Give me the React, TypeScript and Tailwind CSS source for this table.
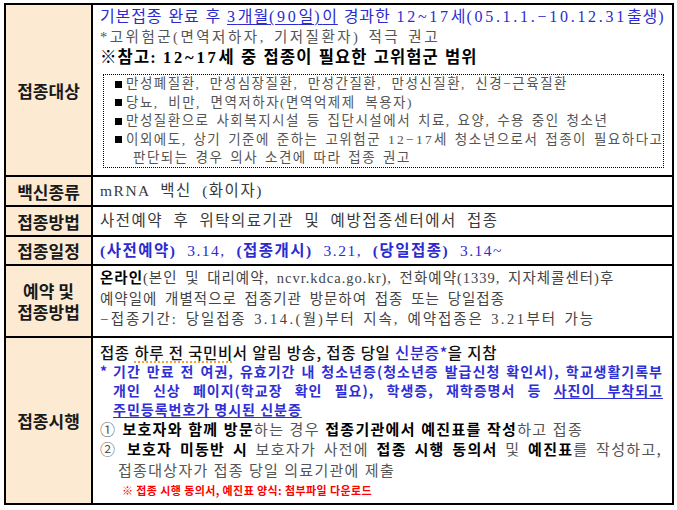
import React from "react";

const serif = "font-['Liberation_Serif','Noto_Sans_CJK_KR',sans-serif]";
const sans = "font-['Noto_Sans_CJK_KR',sans-serif]";

function Row({
  label,
  className,
  children,
}: {
  label: React.ReactNode;
  className: string;
  children: React.ReactNode;
}) {
  return (
    <div className={"flex " + className}>
      <div className="w-[87px] shrink-0 bg-[#fcead3] border-r-2 border-black flex flex-col items-center justify-center text-center font-['Noto_Sans_CJK_KR',sans-serif] font-bold text-[17px] leading-[21px] text-[#1a1a1a]">
        {label}
      </div>
      <div className="flex-1 min-w-0">{children}</div>
    </div>
  );
}

// one line stretched to the width the original line has
function J({ w, className = "", children }: { w: string; className?: string; children: React.ReactNode }) {
  return (
    <div className={"text-justify [text-align-last:justify] whitespace-nowrap " + w + " " + className}>
      {children}
    </div>
  );
}

// digits and punctuation sit on wider cells in the original
function N({ children }: { children: React.ReactNode }) {
  return <span className="tracking-[0.17em]">{children}</span>;
}

function Bullet({ w, children }: { w: string; children: React.ReactNode }) {
  return (
    <div className="flex items-center">
      <span className="w-[7px] h-[7px] bg-black mr-[4px] shrink-0" />
      <J w={w}>{children}</J>
    </div>
  );
}

export default function App() {
  return (
    <div className="w-[677px] h-[510px] bg-white pt-[3px] pl-[4px]">
      <div className="w-[670px] border-2 border-black">
        {/* 접종대상 */}
        <Row label="접종대상" className="h-[170px]">
          <div className="pl-[7px] pt-[2px]">
            <J w="w-[560px]" className={`${serif} text-[16px] leading-[20px] text-[#2b2bd1] tracking-[0.9px] [word-spacing:1px]`}>
              기본접종 완료 후{" "}
              <span className="underline underline-offset-[2px]">
                <N>3</N>개월<N>(90</N>일<N>)</N>이
              </span>{" "}
              경과한 <N>12~17</N>세<N>(05.1.1.−10.12.31</N>출생<N>)</N>
            </J>
            <J w="w-[340px]" className={`${serif} text-[14.5px] leading-[20px] text-[#555] tracking-[2.5px] [word-spacing:1px]`}>
              *고위험군(면역저하자, 기저질환자) 적극 권고
            </J>
            <J w="w-[377px]" className={`${serif} text-[16.5px] leading-[21px] font-bold text-black tracking-[1.1px] [word-spacing:1px]`}>
              ※참고: <N>12~17</N>세 중 접종이 필요한 고위험군 범위
            </J>
            <div className={`${serif} ml-[3px] mr-[8px] mt-[6px] h-[94px] border border-dotted border-black pl-[11px] text-[13.5px] leading-[18.5px] text-[#555] tracking-[1.5px] [word-spacing:2px]`}>
              <Bullet w="w-[442px]">만성폐질환, 만성심장질환, 만성간질환, 만성신질환, 신경−근육질환</Bullet>
              <Bullet w="w-[287px]">당뇨, 비만, 면역저하자(면역억제제 복용자)</Bullet>
              <Bullet w="w-[479px]">만성질환으로 사회복지시설 등 집단시설에서 치료, 요양, 수용 중인 청소년</Bullet>
              <Bullet w="w-[529px]">
                이외에도, 상기 기준에 준하는 고위험군 <N>12−17</N>세 청소년으로서 접종이 필요하다고
              </Bullet>
              <J w="w-[287px]" className="pl-[18px]">판단되는 경우 의사 소견에 따라 접종 권고</J>
            </div>
          </div>
        </Row>

        {/* 백신종류 */}
        <Row label="백신종류" className="h-[30px] border-t-2 border-black">
          <div className={`${serif} h-full flex items-center pl-[7px] text-[15.5px] text-[#3a3a3a] tracking-[1.5px] [word-spacing:5px]`}>
            <J w="w-[160px]">mRNA 백신 (화이자)</J>
          </div>
        </Row>

        {/* 접종방법 */}
        <Row label="접종방법" className="h-[30px] border-t-2 border-black">
          <div className={`${serif} h-full flex items-center pl-[7px] text-[15.5px] text-[#3a3a3a] tracking-[1.5px] [word-spacing:5px]`}>
            <J w="w-[393px]">사전예약 후 위탁의료기관 및 예방접종센터에서 접종</J>
          </div>
        </Row>

        {/* 접종일정 */}
        <Row label="접종일정" className="h-[29px] border-t-2 border-black">
          <div className={`${serif} h-full flex items-center pl-[7px] text-[15.5px] text-[#2b2bd1] tracking-[1.5px] [word-spacing:5px]`}>
            <J w="w-[403px]">
              <b>(사전예약)</b> 3.14, <b>(접종개시)</b> 3.21, <b>(당일접종)</b> 3.14~
            </J>
          </div>
        </Row>

        {/* 예약 및 접종방법 */}
        <Row
          label={
            <>
              <span>예약 및</span>
              <span>접종방법</span>
            </>
          }
          className="h-[72px] border-t-2 border-black"
        >
          <div className={`${serif} pl-[7px] pt-[2px] text-[14.5px] leading-[20.5px] text-[#444] tracking-[1px] [word-spacing:3px]`}>
            <J w="w-[512px]">
              <b className="text-black">온라인</b>(본인 및 대리예약, ncvr.kdca.go.kr), 전화예약(1339, 지자체콜센터)후
            </J>
            <J w="w-[405px]">예약일에 개별적으로 접종기관 방문하여 접종 또는 당일접종</J>
            <J w="w-[493px]" className="tracking-[1.9px] [word-spacing:2px]">
              <N>−</N>접종기간<N>:</N> 당일접종 <N>3.14.(</N>월<N>)</N>부터 지속<N>,</N> 예약접종은 <N>3.21</N>부터 가능
            </J>
          </div>
        </Row>

        {/* 접종시행 */}
        <Row label="접종시행" className="h-[167px] border-t-2 border-black">
          <div className={`${sans} pl-[7px] pr-[9px] pt-[4px]`}>
            <J w="w-[397px]" className="text-[15.5px] leading-[20px] text-[#111] font-medium tracking-[0.6px]">
              접종 <span className="underline decoration-dotted decoration-[#f08a00] underline-offset-[3px]">하루 전 국민비</span>서 알림 방송, 접종 당일{" "}
              <span className="text-[#2b2bd1]">신분증*</span>을 지참
            </J>
            <div className="text-[14px] leading-[19px] font-bold text-[#2f2fd6] tracking-[1px]">
              <div className="flex">
                <span className="w-[13px] shrink-0">*</span>
                <J w="w-[550px]">
                  기간 만료 전 여권, 유효기간 내 청소년증(청소년증 발급신청 확인서), 학교생활기록부
                </J>
              </div>
              <J w="w-[563px]" className="pl-[13px]">
                개인 신상 페이지(학교장 확인 필요), 학생증, 재학증명서 등{" "}
                <span className="underline underline-offset-[2px]">사진이 부착되고</span>
              </J>
              <div className="pl-[13px] whitespace-nowrap">
                <span className="underline underline-offset-[2px]">주민등록번호가 명시된 신분증</span>
              </div>
            </div>
            <J w="w-[483px]" className="text-[15px] leading-[19px] text-[#555] tracking-[1.3px]">
              ① <b className="text-black">보호자와 함께 방문</b>하는 경우{" "}
              <b className="text-black">접종기관에서 예진표를 작성</b>하고 접종
            </J>
            <J w="w-[562px]" className="text-[15px] leading-[21px] text-[#555] tracking-[1.3px]">
              ② <b className="text-black">보호자 미동반 시</b> 보호자가 사전에{" "}
              <b className="text-black">접종 시행 동의서</b> 및 <b className="text-black">예진표</b>를 작성하고,
            </J>
            <J w="w-[295px]" className="pl-[18px] text-[15px] leading-[21px] text-[#555] tracking-[1.3px]">
              접종대상자가 접종 당일 의료기관에 제출
            </J>
            <J w="w-[272px]" className="pl-[22px] text-[11px] leading-[21px] font-bold text-[#ff0000] tracking-[0.4px]">
              ※ 접종 시행 동의서, 예진표 양식: 첨부파일 다운로드
            </J>
          </div>
        </Row>
      </div>
    </div>
  );
}
